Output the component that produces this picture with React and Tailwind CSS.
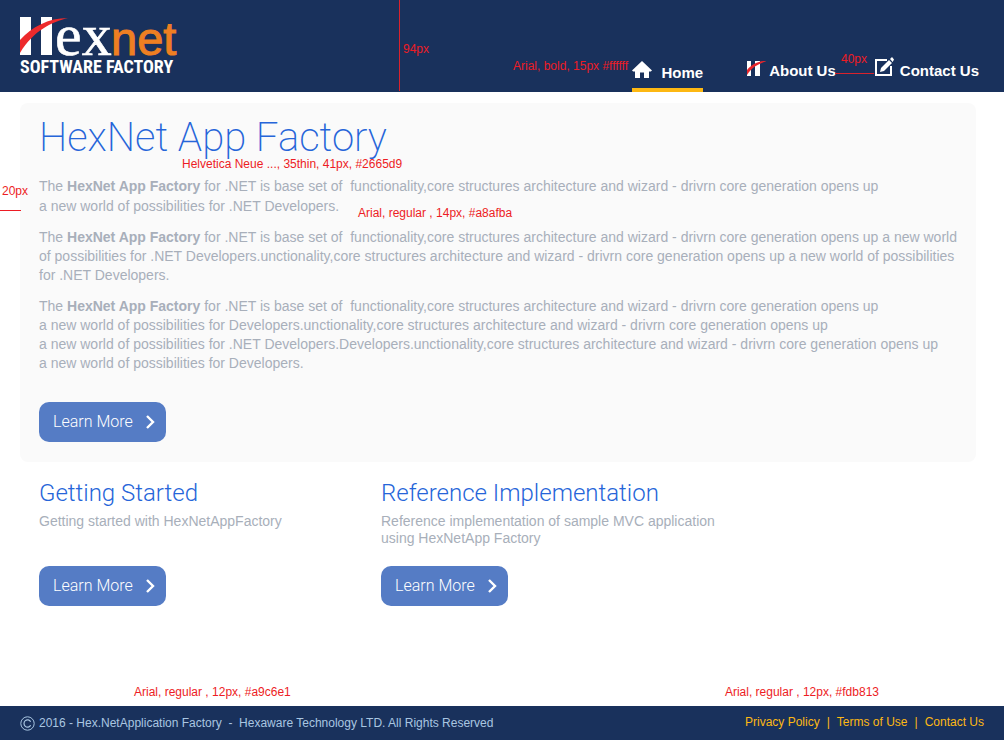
import React from "react";

function Note({ className, children }) {
  return (
    <span className={`absolute whitespace-pre text-xs leading-4 text-[#ed1c24] ${className}`}>
      {children}
    </span>
  );
}

function Logo() {
  return (
    <svg className="h-[58px] w-[160px] overflow-visible" viewBox="0 0 160 58" role="img" aria-label="Hexnet Software Factory">
      <path fill="#fff" d="M0 0H11V38H0ZM21 0H32V38H21Z" />
      <path fill="#ed2a2c" d="M0 23C12 10 28 1 48 1C32 5 14 13 0 36Z" />
      <text x="35" y="38" fill="#fff" stroke="#fff" strokeWidth="0.6" fontFamily="Liberation Serif, serif" fontSize="60">ex</text>
      <text x="91" y="38" fill="#ee7f22" stroke="#ee7f22" strokeWidth="1" fontFamily="Liberation Sans, sans-serif" fontSize="47">net</text>
      <text x="0" y="56" fill="#fff" fontFamily="Roboto Condensed, Roboto, sans-serif" fontWeight="700" fontSize="18">SOFTWARE FACTORY</text>
    </svg>
  );
}

function HomeIcon() {
  return (
    <svg className="h-[17px] w-5" viewBox="0 0 20 17" fill="#fff" aria-hidden="true">
      <path d="M10 0L20 9.5L18.8 10.5H17V17H12V11.5H8V17H3V10.5H1.2L0 9.5Z" />
    </svg>
  );
}

function HexIcon() {
  return (
    <svg className="h-4 w-5" viewBox="0 0 20 16" aria-hidden="true">
      <path fill="#fff" d="M1 1H5V16H1ZM9 1H14V16H9Z" />
      <path fill="#e8262b" d="M1 10C6 4.500 12 1 20.500 1C14 3.500 6 6.500 1 15Z" />
    </svg>
  );
}

function EditIcon() {
  return (
    <svg className="h-[19px] w-[19px]" viewBox="0 0 19 19" aria-hidden="true">
      <path fill="none" stroke="#fff" strokeWidth="2" d="M12 3H1V18H16V9" />
      <path fill="#fff" d="M5 15L6 11L14 3L17 6L9 14ZM15 2L17 0L19 2.5L17.7 5Z" />
    </svg>
  );
}

function LearnMore() {
  return (
    <button
      type="button"
      className="flex h-10 items-center gap-[13px] rounded-[10px] bg-[#557cc5] pr-[11px] pl-[14px] font-['Roboto',sans-serif] text-base font-light text-white"
    >
      Learn More
      <svg className="h-[14px] w-[9px]" viewBox="0 0 9 14" fill="none" stroke="#fff" strokeWidth="2.4" aria-hidden="true">
        <path d="M1 1L7 7L1 13" />
      </svg>
    </button>
  );
}

function Feature({ title, children }) {
  return (
    <section className="flex flex-col items-start">
      <h2 className="font-['Roboto',sans-serif] text-2xl leading-[30px] font-light text-[#2665d9]">{title}</h2>
      <p className="mt-[5px] h-[53px] text-sm leading-[17px]">{children}</p>
      <LearnMore />
    </section>
  );
}

export default function App() {
  return (
    <div className="flex min-h-screen flex-col bg-white font-['Liberation_Sans',Arial,sans-serif] text-[#a8afba]">
      <header className="relative flex h-[92px] items-start justify-between bg-[#19315c] pt-[17px] pr-[25px] pl-5">
        <a href="#"><Logo /></a>
        <nav className="flex h-[75px] gap-[39px] text-[15px] leading-5 font-bold text-white">
          <a href="#" className="mr-1 flex items-end gap-[9px] border-b-4 border-[#fdb813] pb-[5px]">
            <span className="pb-[5px]"><HomeIcon /></span>
            Home
          </a>
          <a href="#" className="flex items-end gap-[3px] pb-[11px]">
            <span className="pb-[5px]"><HexIcon /></span>
            About Us
          </a>
          <a href="#" className="flex items-end gap-[6px] pb-[11px]">
            <span className="pb-[5px]"><EditIcon /></span>
            Contact Us
          </a>
        </nav>
        <div className="absolute top-0 left-[399px] h-[91px] w-px bg-[#d8222c]" />
        <Note className="top-[41px] left-[403px]">94px</Note>
        <Note className="top-[58px] right-[376px]">Arial, bold, 15px #ffffff</Note>
        <Note className="top-[51px] right-[137px]">40px</Note>
        <div className="absolute top-[73px] right-[130px] h-px w-[39px] bg-[#d8222c]" />
      </header>

      <main className="relative grow pt-[11px] pb-11">
        <section className="relative mr-7 ml-5 rounded-lg bg-[#fafafa] px-[19px] pb-5 text-sm leading-[19px]">
          <h1 className="pt-2 font-['Roboto',sans-serif] text-[40px] leading-[54px] font-extralight text-[#2665d9]">HexNet App Factory</h1>
          <p className="pt-[11px] leading-5">
            The <b>HexNet App Factory</b> for .NET is base set of &nbsp;functionality,core structures architecture and wizard - drivrn core generation opens up
            <br />a new world of possibilities for .NET Developers.
          </p>
          <p className="pt-3">
            The <b>HexNet App Factory</b> for .NET is base set of &nbsp;functionality,core structures architecture and wizard - drivrn core generation opens up a new world
            <br />of possibilities for .NET Developers.unctionality,core structures architecture and wizard - drivrn core generation opens up a new world of possibilities
            <br />for .NET Developers.
          </p>
          <p className="pt-3 pb-[29px]">
            The <b>HexNet App Factory</b> for .NET is base set of &nbsp;functionality,core structures architecture and wizard - drivrn core generation opens up
            <br />a new world of possibilities for Developers.unctionality,core structures architecture and wizard - drivrn core generation opens up
            <br />a new world of possibilities for .NET Developers.Developers.unctionality,core structures architecture and wizard - drivrn core generation opens up
            <br />a new world of possibilities for Developers.
          </p>
          <LearnMore />
          <Note className="top-[53px] left-[162px]">Helvetica Neue ..., 35thin, 41px, #2665d9</Note>
          <Note className="top-[102px] left-[338px]">Arial, regular , 14px, #a8afba</Note>
        </section>

        <div className="grid grid-cols-[342px_1fr] pt-4 pl-[39px]">
          <Feature title="Getting Started">Getting started with HexNetAppFactory</Feature>
          <Feature title="Reference Implementation">
            Reference implementation of sample MVC application
            <br />using HexNetApp Factory
          </Feature>
        </div>

        <Note className="top-[91px] left-[2px]">20px</Note>
        <div className="absolute top-[118px] left-0 h-px w-[21px] bg-[#ed1c24]" />
        <Note className="bottom-[6px] left-[134px]">Arial, regular , 12px, #a9c6e1</Note>
        <Note className="right-[125px] bottom-[6px]">Arial, regular , 12px, #fdb813</Note>
      </main>

      <footer className="flex h-[34px] items-center justify-between bg-[#19315c] px-5 text-xs">
        <p className="flex items-center gap-1 text-[#a9c6e1]">
          <svg className="size-[15px]" viewBox="0 0 15 15" fill="none" stroke="#a9c6e1" role="img" aria-label="Copyright">
            <circle cx="7.5" cy="7.5" r="6.7" />
            <path strokeWidth="1.2" d="M10.6 9.2A3.5 3.7 0 1 1 10.6 5.8" />
          </svg>
          2016 - Hex.NetApplication Factory &nbsp;- &nbsp;Hexaware Technology LTD. All Rights Reserved
        </p>
        <nav className="flex gap-[7px] pb-0.5 text-[#fdb813]">
          <a href="#">Privacy Policy</a>
          <span>|</span>
          <a href="#">Terms of Use</a>
          <span>|</span>
          <a href="#">Contact Us</a>
        </nav>
      </footer>
    </div>
  );
}
